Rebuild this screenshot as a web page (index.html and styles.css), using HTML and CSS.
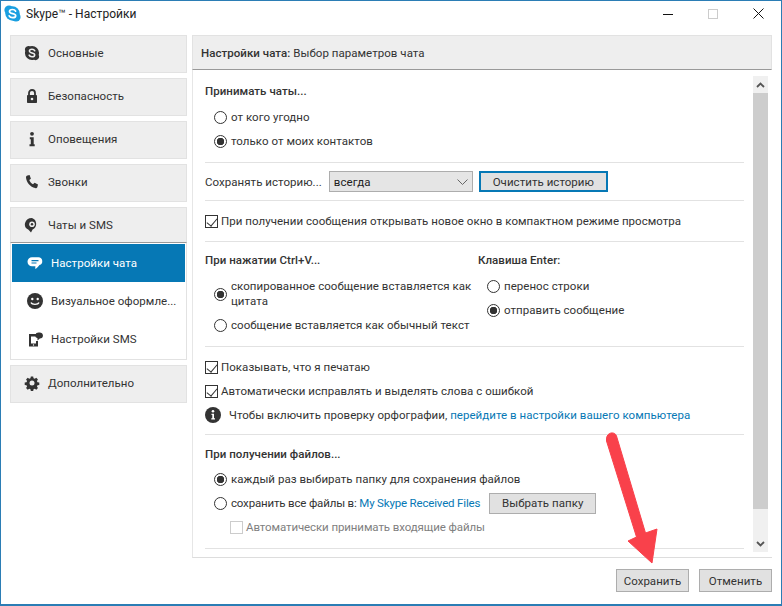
FILE: index.html
```html
<!DOCTYPE html>
<html lang="ru">

<head>
    <meta charset="UTF-8">
    <title>Skype - Настройки</title>
    <link rel="stylesheet" href="styles.css">
</head>

<body>
    <div class="window">
        <div class="titlebar">
            <svg class="app-logo" width="17" height="17" viewBox="0 0 17 17">
                <circle cx="5" cy="5" r="4.600" fill="#1a9fe0" />
                <circle cx="12" cy="12" r="4.600" fill="#1a9fe0" />
                <circle cx="8.500" cy="8.500" r="7.200" fill="#1a9fe0" />
                <path d="M11.600 6.200C11 4.900 9.800 4.500 8.400 4.500 6.700 4.500 5.500 5.300 5.500 6.500c0 2.800 6.200 1.400 6.200 4.200 0 1.200-1.300 2-3.100 2-1.600 0-2.800-.6-3.400-1.900" fill="none" stroke="#fff" stroke-width="1.700" stroke-linecap="round" />
            </svg>
            <span class="title-text">Skype™ - Настройки</span>
            <div class="win-controls">
                <svg width="10" height="10" viewBox="0 0 10 10"><path d="M0 5.500h10" stroke="#111" stroke-width="1" /></svg>
                <svg width="10" height="10" viewBox="0 0 10 10"><rect x=".5" y=".5" width="9" height="9" fill="none" stroke="#ccc" /></svg>
                <svg width="11" height="11" viewBox="0 0 11 11"><path d="M.5.500l10 10M10.500.500l-10 10" stroke="#111" stroke-width="1" /></svg>
            </div>
        </div>

        <div class="body">
            <nav class="sidebar">
                <div class="nav-item">
                    <svg class="nav-icon" viewBox="0 0 16 16">
                        <path d="M4.500 1a3.500 3.500 0 0 0-3.200 5A7 7 0 0 0 10 14.700 3.500 3.500 0 0 0 14.700 10 7 7 0 0 0 6 1.300 3.500 3.500 0 0 0 4.500 1z" fill="#333" />
                        <path d="M10.800 5.800C10.300 4.800 9.300 4.300 8 4.300c-1.500 0-2.600.7-2.600 1.800 0 2.500 5.300 1.300 5.300 3.800 0 1.100-1.200 1.800-2.700 1.800-1.400 0-2.400-.5-2.900-1.600" fill="none" stroke="#eee" stroke-width="1.500" stroke-linecap="round" />
                    </svg>
                    <span>Основные</span>
                </div>
                <div class="nav-item">
                    <svg class="nav-icon" viewBox="0 0 16 16">
                        <path d="M5 7V5a3 3 0 0 1 6 0v2" fill="none" stroke="#333" stroke-width="1.800" />
                        <rect x="3" y="7" width="10" height="8" rx=".8" fill="#333" />
                        <circle cx="8" cy="11" r="1.300" fill="#eee" />
                    </svg>
                    <span>Безопасность</span>
                </div>
                <div class="nav-item">
                    <svg class="nav-icon" viewBox="0 0 16 16">
                        <circle cx="8" cy="2.800" r="1.900" fill="#333" />
                        <path d="M5.800 6.300h3.900v7h1v2H5.500v-2h1.300v-5h-1z" fill="#333" />
                    </svg>
                    <span>Оповещения</span>
                </div>
                <div class="nav-item">
                    <svg class="nav-icon" viewBox="0 0 16 16">
                        <path d="M3.400 1.500L5.600 1l1.300 3.700-1.600 1.300c.6 1.800 2 3.300 3.700 4.200l1.600-1.500 3.400 1.800-.6 2.400c-.3.800-1.300 1.400-2.300 1.200C6.400 13 2.300 8.300 2 3.500c0-.9.500-1.700 1.400-2z" fill="#333" />
                    </svg>
                    <span>Звонки</span>
                </div>
                <div class="nav-item nav-open">
                    <svg class="nav-icon" viewBox="0 0 16 16">
                        <path d="M8 1a7 6.300 0 0 0-3.500 11.800L7 15.500l1.600-2.900A6.300 6.300 0 0 0 8 1z" fill="#333" />
                        <circle cx="8" cy="7.300" r="2.800" fill="#eee" />
                        <circle cx="8" cy="7.300" r="1.200" fill="#333" />
                    </svg>
                    <span>Чаты и SMS</span>
                </div>
                <div class="subnav">
                    <div class="sub-item active">
                        <svg class="nav-icon" viewBox="0 0 16 16">
                            <path d="M5 1.500h6.500a4 4 0 0 1 1 7.800c-1 1.200-2.300 2.800-3.700 3.700-.6.400-.6-.6-.4-2.500H5a4.500 4.500 0 0 1 0-9z" fill="#fff" transform="translate(0 .8)" />
                            <path d="M4.500 5.600h7M4.500 8h5" stroke="#0678b5" stroke-width="1.200" />
                        </svg>
                        <span>Настройки чата</span>
                    </div>
                    <div class="sub-item">
                        <svg class="nav-icon" viewBox="0 0 16 16">
                            <circle cx="8" cy="8" r="8" fill="#333" />
                            <circle cx="5.300" cy="6" r="1.200" fill="#fff" />
                            <circle cx="10.700" cy="6" r="1.200" fill="#fff" />
                            <path d="M4 9.500c1 2.400 7 2.400 8 0" fill="none" stroke="#fff" stroke-width="1.300" />
                        </svg>
                        <span>Визуальное оформле...</span>
                    </div>
                    <div class="sub-item">
                        <svg class="nav-icon" viewBox="0 0 16 16">
                            <path d="M2 3h7v2.500H4v7h5V10h2v5.500H2z" fill="#333" />
                            <circle cx="6.500" cy="14" r=".7" fill="#fff" />
                            <path d="M12 1.500a3.500 3 0 0 1 .8 6L10.500 9.500V7.300a3.500 3 0 0 1 1.500-5.800z" fill="#333" />
                        </svg>
                        <span>Настройки SMS</span>
                    </div>
                </div>
                <div class="nav-item">
                    <svg class="nav-icon" viewBox="0 0 16 16">
                        <path d="M6.700 1h2.600l.4 2 1.300.6 1.800-1.100 1.800 1.800-1.100 1.800.6 1.300 2 .4v2.600l-2 .4-.6 1.300 1.100 1.800-1.800 1.800-1.800-1.100-1.300.6-.4 2H6.700l-.4-2-1.300-.6-1.800 1.100-1.800-1.800 1.100-1.800-.6-1.300-2-.4V7.800l2-.4.600-1.300-1.100-1.800 1.800-1.800 1.800 1.100 1.300-.6z" fill="#333" transform="translate(.8 .6) scale(.9)" />
                        <circle cx="8" cy="8" r="2.500" fill="#eee" />
                    </svg>
                    <span>Дополнительно</span>
                </div>
            </nav>

            <main class="main">
                <div class="panel-title"><b>Настройки чата:</b> Выбор параметров чата</div>
                <div class="scroll-area">
                    <div class="settings">
                        <section class="group group-chats">
                            <div class="row heading">Принимать чаты...</div>
                            <div class="row indent"><i class="radio"></i>от кого угодно</div>
                            <div class="row indent"><i class="radio on"></i>только от моих контактов</div>
                        </section>
                        <section class="group group-history">
                            <span>Сохранять историю...</span>
                            <div class="select">всегда
                                <svg width="11" height="6" viewBox="0 0 11 6"><path d="M.5.500l5 5 5-5" fill="none" stroke="#666" /></svg>
                            </div>
                            <button class="btn btn-focus">Очистить историю</button>
                        </section>
                        <section class="group group-compact">
                            <div class="row"><i class="check on"></i>При получении сообщения открывать новое окно в компактном режиме просмотра</div>
                        </section>
                        <section class="group group-paste">
                            <div class="col col-left">
                                <div class="row heading">При нажатии Ctrl+V...</div>
                                <div class="row indent two-lines"><i class="radio on"></i><span>скопированное сообщение вставляется как цитата</span></div>
                                <div class="row indent"><i class="radio"></i>сообщение вставляется как обычный текст</div>
                            </div>
                            <div class="col">
                                <div class="row heading">Клавиша Enter:</div>
                                <div class="row indent"><i class="radio"></i>перенос строки</div>
                                <div class="row indent"><i class="radio on"></i>отправить сообщение</div>
                            </div>
                        </section>
                        <section class="group group-typing">
                            <div class="row"><i class="check on"></i>Показывать, что я печатаю</div>
                            <div class="row"><i class="check on"></i>Автоматически исправлять и выделять слова с ошибкой</div>
                            <div class="row">
                                <svg class="info-icon" width="16" height="16" viewBox="0 0 16 16">
                                    <circle cx="8" cy="8" r="8" fill="#333" />
                                    <circle cx="8" cy="4.300" r="1.300" fill="#fff" />
                                    <path d="M6.500 6.800h2.500v4.500h1v1.300H6.300v-1.300h1V8.100h-.8z" fill="#fff" />
                                </svg>
                                <span>Чтобы включить проверку орфографии, <a class="link">перейдите в настройки вашего компьютера</a></span>
                            </div>
                        </section>
                        <section class="group group-files">
                            <div class="row heading">При получении файлов...</div>
                            <div class="row indent"><i class="radio on"></i>каждый раз выбирать папку для сохранения файлов</div>
                            <div class="row indent tight"><i class="radio"></i>сохранить все файлы в:&nbsp;<a class="link">My Skype Received Files</a><button class="btn btn-folder">Выбрать папку</button></div>
                            <div class="row indent-more muted"><i class="check off"></i>Автоматически принимать входящие файлы</div>
                        </section>
                    </div>
                    <div class="scrollbar">
                        <div class="arrow-btn"><svg width="9" height="6" viewBox="0 0 9 6"><path d="M1 5l3.500-3.500L8 5" fill="none" stroke="#555" stroke-width="1.800" /></svg></div>
                        <div class="thumb"></div>
                        <div class="track"></div>
                        <div class="arrow-btn"><svg width="9" height="6" viewBox="0 0 9 6"><path d="M1 1l3.500 3.500L8 1" fill="none" stroke="#555" stroke-width="1.800" /></svg></div>
                    </div>
                </div>
                <div class="footer">
                    <button class="btn btn-footer">Сохранить</button>
                    <button class="btn btn-footer">Отменить</button>
                </div>
            </main>
        </div>

        <svg class="annotation" width="70" height="145" viewBox="0 0 70 145">
            <path d="M1.500 7C1.500 0 10-1 11.500 4L40.500 101 52 97 47 131 23 109 31.500 105 1.500 9z" fill="#f9414b" stroke="#f9414b" stroke-width="1" stroke-linejoin="round" />
        </svg>
    </div>
</body>

</html>
```

FILE: styles.css
```css
* {
    box-sizing: border-box;
    margin: 0;
    padding: 0;
}

body {
    font-family: Roboto, "Noto Sans", sans-serif;
    font-size: 11.500px;
    letter-spacing: 0.04px;
    color: #333;
    background-color: #fff;
}

.window {
    position: relative;
    width: 782px;
    height: 606px;
    border: 1px solid #2b7db5;
    border-bottom-width: 2px;
    overflow: hidden;
}

.titlebar {
    display: flex;
    align-items: center;
    height: 25px;
    padding-left: 3px;
}

.app-logo {
    margin-right: 5px;
}

.title-text {
    font-size: 12px;
    color: #222;
}

.win-controls {
    display: flex;
    align-items: center;
    gap: 35px;
    margin-left: auto;
    padding-right: 17px;
}

.body {
    display: flex;
    gap: 5px;
    padding: 9px 9px 0;
}

.sidebar {
    width: 177px;
    flex-shrink: 0;
}

.nav-item {
    display: flex;
    align-items: center;
    height: 38px;
    margin-bottom: 5px;
    padding-left: 13px;
    padding-bottom: 2px;
    background-color: #eee;
    border: 1px solid #e2e2e2;
}

.nav-open {
    margin-bottom: 0;
    height: 36px;
    padding-bottom: 0;
    border-bottom: 1px solid #999;
}

.nav-icon {
    width: 16px;
    height: 16px;
    margin-right: 8px;
    flex-shrink: 0;
}

.subnav {
    margin-bottom: 5px;
    padding: 1px 1px 0;
    border: 1px solid #e2e2e2;
    border-top: none;
    height: 117px;
}

.sub-item {
    display: flex;
    align-items: center;
    height: 38px;
    padding-left: 15px;
    white-space: nowrap;
}

.sub-item.active {
    background-color: #0678b5;
    color: #fff;
}

.main {
    width: 580px;
}

.panel-title {
    height: 35px;
    padding-left: 8px;
    line-height: 34px;
    background-color: #eee;
    border: 1px solid #e2e2e2;
    border-bottom: 1px solid #999;
}

.panel-title b {
    font-weight: 500;
}

.scroll-area {
    display: flex;
    height: 488px;
    border-left: 1px solid #e6e6e6;
    border-bottom: 1px solid #ddd;
}

.settings {
    width: 539px;
    margin-left: 12px;
    padding-top: 9px;
}

.group {
    border-bottom: 1px solid #e2e2e2;
}

.row {
    display: flex;
    align-items: center;
    height: 24px;
}

.heading {
    font-weight: 500;
    color: #333;
}

.indent {
    padding-left: 9px;
}

.indent-more {
    padding-left: 25px;
}

.tight {
    letter-spacing: -0.17px;
}

.two-lines {
    height: 30px;
    line-height: 15px;
    margin: 7px 0 4px;
}

.muted {
    color: #808080;
    letter-spacing: -0.1px;
}

.link {
    color: #0678b5;
}

.radio {
    width: 13px;
    height: 13px;
    margin-right: 4px;
    flex-shrink: 0;
    border: 1px solid #333;
    border-radius: 50%;
    background-color: #fff;
}

.radio.on {
    background: radial-gradient(circle, #333 0 3.500px, #fff 4px);
}

.check {
    position: relative;
    width: 13px;
    height: 13px;
    margin-right: 3px;
    flex-shrink: 0;
    border: 1px solid #333;
}

.check.on::after {
    content: "";
    position: absolute;
    left: 3px;
    top: 0;
    width: 5px;
    height: 9px;
    border: solid #333;
    border-width: 0 1.500px 1.500px 0;
    transform: rotate(40deg);
}

.check.off {
    border-color: #ccc;
}

.btn {
    font-family: inherit;
    font-size: 11.500px;
    letter-spacing: 0.04px;
    color: #333;
    background-color: #e1e1e1;
    border: 1px solid #adadad;
}

.btn-focus {
    width: 129px;
    height: 21px;
    border: 2px solid #0678b5;
}

.btn-folder {
    width: 107px;
    height: 21px;
    margin-left: 9px;
}

.btn-footer {
    width: 73px;
    height: 23px;
}

.group-chats {
    padding-bottom: 9px;
}

.group-chats .row:first-child {
    margin-bottom: 2px;
}

.group-history {
    display: flex;
    align-items: center;
    height: 38px;
}

.select {
    display: flex;
    align-items: center;
    justify-content: space-between;
    width: 144px;
    height: 21px;
    margin: 0 6px 0 7px;
    padding: 0 4px;
    background-color: #e5e5e5;
    border: 1px solid #adadad;
    color: #222;
}

.group-compact {
    padding: 8px 0;
    height: 41px;
}

.group-paste {
    display: flex;
    padding-top: 6px;
    height: 105px;
}

.col-left {
    width: 273px;
}

.col-left .row {
    white-space: nowrap;
}

.col-left .two-lines {
    white-space: normal;
}

.group-paste .heading {
    margin-bottom: 2px;
}

.group-typing {
    padding-top: 8px;
    height: 88px;
}

.info-icon {
    margin-right: 8px;
}

.group-files {
    padding-top: 7px;
    height: 114px;
}

.group-files .heading {
    margin-bottom: 1px;
}

.scrollbar {
    display: flex;
    flex-direction: column;
    width: 15px;
    height: 476px;
    margin: 6px 0 0 9px;
    background-color: #f0f0f0;
}

.arrow-btn {
    display: flex;
    align-items: center;
    justify-content: center;
    height: 17px;
}

.thumb {
    height: 416px;
    background-color: #cdcdcd;
}

.track {
    flex: 1;
}

.footer {
    display: flex;
    justify-content: flex-end;
    gap: 10px;
    padding-top: 11px;
}

.annotation {
    position: absolute;
    left: 604px;
    top: 431px;
}
```
